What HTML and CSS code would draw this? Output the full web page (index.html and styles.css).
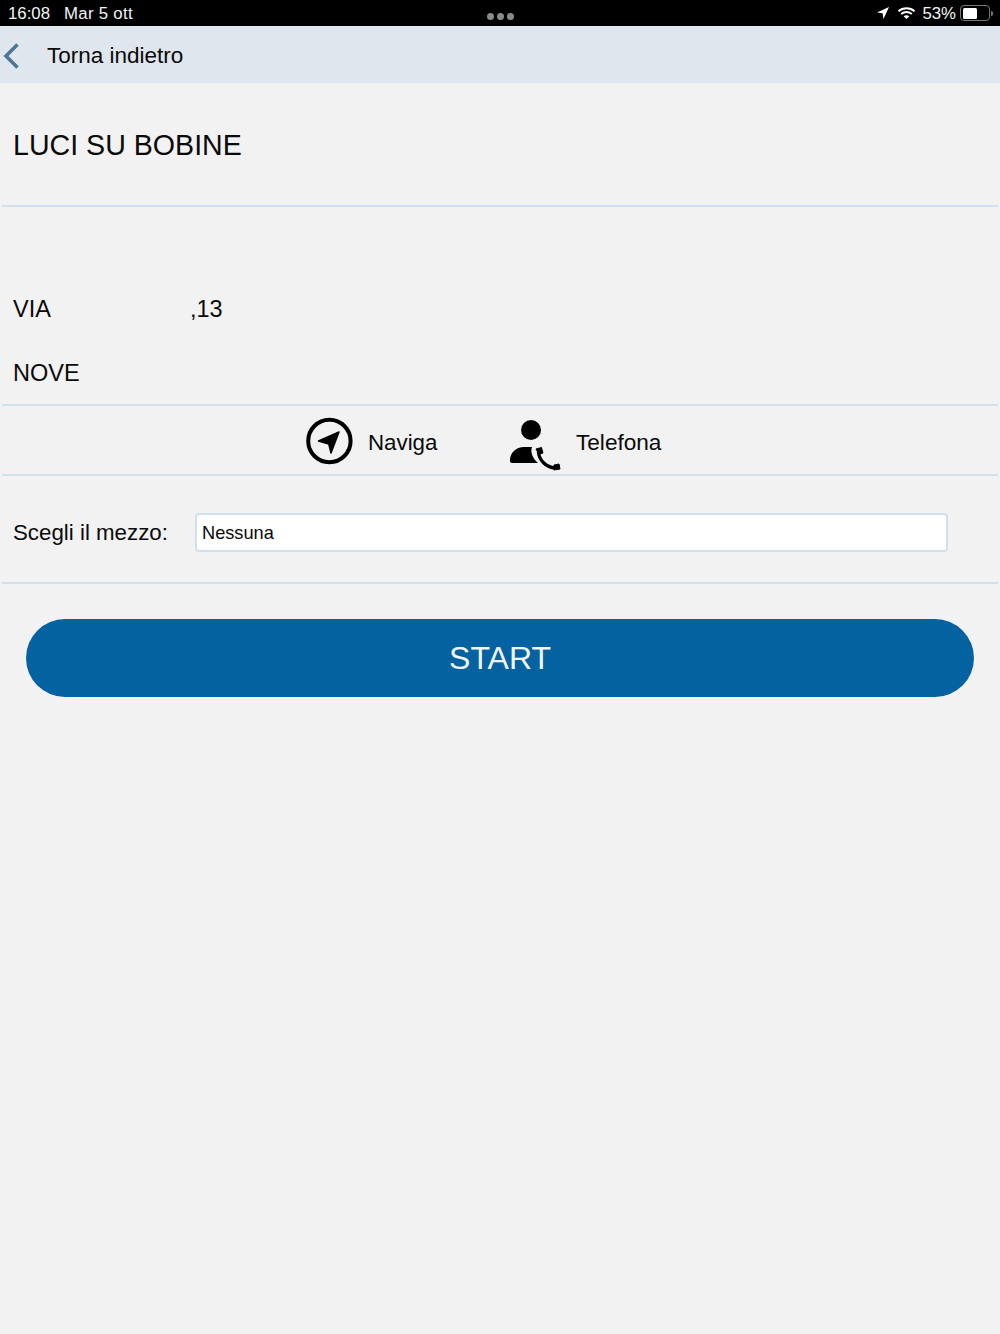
FILE: index.html
```html
<!DOCTYPE html>
<html lang="it">
<head>
<meta charset="utf-8">
<title>Torna indietro</title>
<link rel="stylesheet" href="styles.css">
</head>
<body>
<div class="status">
  <div class="status-left"><span>16:08</span><span>Mar 5 ott</span></div>
  <div class="dots"><i></i><i></i><i></i></div>
  <div class="status-right">
    <svg class="loc" width="14" height="14" viewBox="0 0 14 14"><path fill="#fff" d="M13 1 1 6.600l5.600.6.900 5.800z"/></svg>
    <svg class="wifi" width="19" height="14" viewBox="0 0 19 14"><path fill="none" stroke="#fff" stroke-width="2" d="M1.500 5.200c4.500-4 11.500-4 16 0M4.200 8c3-2.600 7.600-2.600 10.600 0"/><path fill="#fff" d="M9.500 13 6.600 10.300c1.700-1.300 4.100-1.300 5.800 0z"/></svg>
    <span class="pct">53%</span>
    <div class="battery"><div class="cell"><div class="level"></div></div><div class="nub"></div></div>
  </div>
</div>
<header class="nav">
  <svg class="back" width="18" height="26" viewBox="0 0 18 26"><path fill="none" stroke="#4f7699" stroke-width="3.600" d="M15.500 1.500 4 13l11.500 11.500"/></svg>
  <span>Torna indietro</span>
</header>
<main>
  <section class="title-row"><h1>LUCI SU BOBINE</h1></section>
  <section class="address">
    <div class="street"><span class="via">VIA</span><span>,13</span></div>
    <div class="city">NOVE</div>
  </section>
  <section class="actions">
    <a class="action nav-action">
      <svg width="48" height="48" viewBox="0 0 48 48"><circle cx="24.400" cy="24" r="21.200" fill="none" stroke="#000" stroke-width="4"/><path stroke="#000" stroke-width="1.500" stroke-linejoin="round" d="M34 15 13.500 24l10.300 3 2.200 9z"/></svg>
      <span>Naviga</span>
    </a>
    <a class="action tel-action">
      <svg width="52" height="52" viewBox="0 0 52 52"><circle cx="22" cy="11" r="10"/><path d="M1 42V41C1 34 7 28 15 28H23C21 33 24 40 29 44H3C2 44 1 43 1 42Z"/><path fill="none" stroke="#000" stroke-width="3.400" d="M29.500 33C30 41 37 48.500 46 49"/><path stroke="#000" stroke-linejoin="round" d="M27 30 32.500 28.500 34 34 30 35.500ZM45 46 50 45 51 50 45 51Z"/></svg>
      <span>Telefona</span>
    </a>
  </section>
  <section class="vehicle">
    <label class="vehicle-label">Scegli il mezzo:</label>
    <div class="select">Nessuna</div>
  </section>
  <div class="cta"><button class="start">START</button></div>
</main>
</body>
</html>
```

FILE: styles.css
```css
* { box-sizing: border-box; }
html, body { margin: 0; padding: 0; }
body {
  width: 1000px;
  height: 1334px;
  overflow: hidden;
  background: #f2f2f2;
  color: #0a0a0a;
  font-family: "Liberation Sans", Arial, sans-serif;
}
.status {
  height: 26px;
  background: #000;
  color: #f4f4f4;
  display: grid;
  grid-template-columns: 1fr auto 1fr;
  align-items: center;
  padding: 0 8px;
  font-size: 16.800px;
  line-height: 25px;
}
.status-left { display: flex; gap: 14px; }
.status-left span + span { letter-spacing: .3px; }
.dots { display: flex; gap: 3px; padding-top: 6px; }
.dots i { width: 7px; height: 7px; border-radius: 50%; background: #8a8a8a; }
.status-right { display: flex; justify-content: flex-end; align-items: center; margin-right: -1px; }
.loc { margin-right: 7px; }
.wifi { margin-right: 6px; }
.pct { margin-right: 4px; }
.battery { display: flex; align-items: center; }
.cell { width: 30px; height: 16px; border: 1px solid #777; border-radius: 4px; padding: 1.500px; }
.level { width: 14px; height: 100%; background: #fff; border-radius: 1.500px; }
.nub { width: 2px; height: 5px; background: #777; border-radius: 0 2px 2px 0; margin-left: 1px; }
.nav {
  height: 57px;
  background: #dfe6ee;
  display: flex;
  align-items: center;
  font-size: 22.500px;
  padding-left: 2px;
}
.nav span { padding-top: 3px; }
.back { margin-right: 27px; margin-top: 2px; }
main { display: block; }
.title-row, .address, .actions, .vehicle {
  margin: 0 2px;
  border-bottom: 2px solid #d3dfea;
}
.title-row { height: 124px; padding: 44px 11px 0; }
h1 { margin: 0; font-size: 28.600px; font-weight: 400; line-height: 36px; }
.address { height: 199px; padding: 0 11px; font-size: 23.500px; }
.street { display: flex; padding-top: 88px; line-height: 28px; }
.via { width: 177px; }
.city { margin-top: 36px; line-height: 28px; }
.actions {
  height: 70px;
  display: flex;
  align-items: center;
  font-size: 22.500px;
  padding-left: 303px;
}
.action { display: flex; align-items: center; }
.action span { padding-top: 5px; }
.nav-action { gap: 15px; width: 204px; font-size: 22.300px; }
.tel-action { gap: 15px; font-size: 22.600px; }
.nav-action svg { margin-top: 2px; }
.tel-action svg { margin-top: 10px; }
.vehicle {
  height: 108px;
  display: flex;
  align-items: center;
  padding: 0 0 0 11px;
  font-size: 22.300px;
}
.vehicle-label { width: 182px; margin-top: 7px; }
.select {
  width: 753px;
  height: 39px;
  margin-top: 7px;
  background: #fff;
  border: 2px solid #d3dfea;
  border-radius: 4px;
  font-size: 18.200px;
  line-height: 36px;
  padding-left: 5px;
}
.cta { padding: 35px 26px 0; }
.start {
  display: block;
  width: 100%;
  height: 78px;
  border: 0;
  border-radius: 39px;
  background: #03629f;
  color: #f2f6fa;
  font-family: inherit;
  font-size: 32px;
}
```
